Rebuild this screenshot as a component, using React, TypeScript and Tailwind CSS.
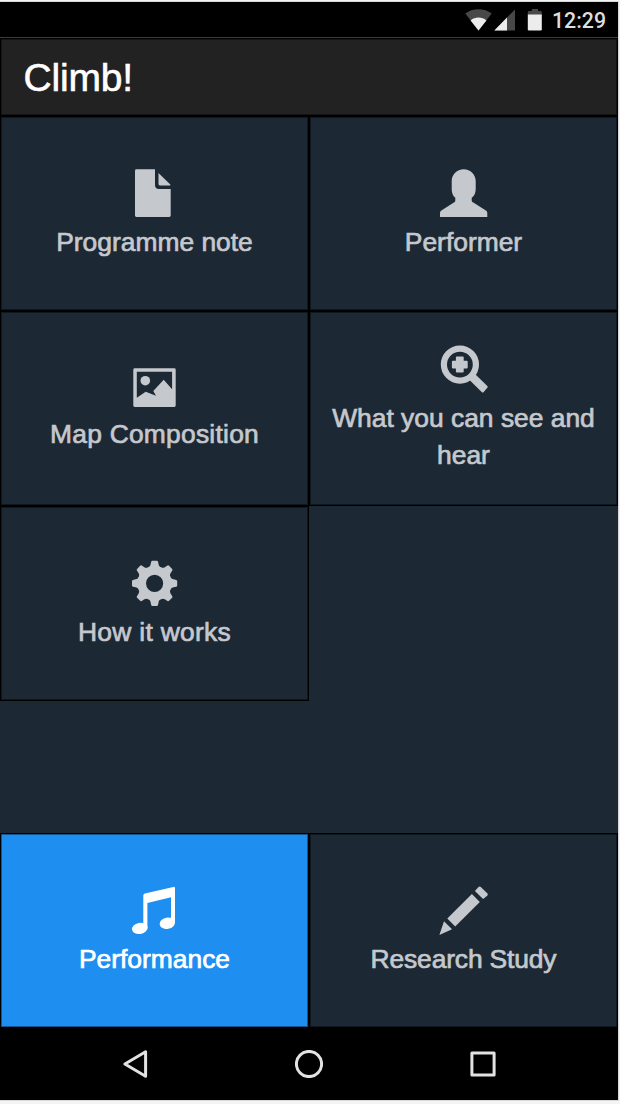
import React from "react";

function Icon({ children }: { children: React.ReactNode }) {
  return (
    <svg viewBox="-0.5 0 48 48" className="mr-px mb-[7px] block h-12 w-12 shrink-0 overflow-visible fill-current">
      {children}
    </svg>
  );
}

const FileIcon = () => (
  <Icon>
    <path d="M5.9 .3H24.5V16Q24.5 20 28.5 20H40.2V46.6Q40.2 48 38.8 48H5.9Q4.5 48 4.5 46.6V1.7Q4.5 .3 5.9 .3Z" />
    <path d="M28 4L39.8 15.4V16.5H29.4Q28 16.5 28 15.1Z" />
  </Icon>
);

const UserIcon = () => (
  <Icon>
    <path d="M24.2 .3C31 .3 36.2 5.5 36.2 12V20C36.2 24 34.8 27 32.2 28.7V31.2C32.2 32.3 32.8 33 33.8 33.6L46.4 41.6Q47.8 42.5 47.8 44V48H.5V44Q.5 42.5 1.9 41.6L14.4 33.6C15.3 33 15.8 32.3 15.8 31.2V28.7C13.4 27 12.2 24 12.2 20V12C12.2 5.5 17.4 .3 24.2 .3Z" />
  </Icon>
);

const PictureIcon = () => (
  <Icon>
    <path
      fillRule="evenodd"
      d="M4.2 7.3H43.8Q45.2 7.3 45.2 8.7V44.6Q45.2 46 43.8 46H4.2Q2.8 46 2.8 44.6V8.7Q2.8 7.3 4.2 7.3ZM6.3 10.8V36.7L15.2 30.7L25.5 34.7L22.8 30L33.2 18.7L41.6 28.3V10.8Z"
    />
    <circle cx="14.8" cy="19.7" r="4.8" />
  </Icon>
);

const ZoomInIcon = () => (
  <Icon>
    <circle cx="20.4" cy="19.6" r="16" fill="none" stroke="currentColor" strokeWidth="6.2" />
    <rect x="16.4" y="11.6" width="7.8" height="16" rx="1" />
    <rect x="12.4" y="15.7" width="15.8" height="7.9" rx="1" />
    <path d="M35.5 29L47.8 41Q48.8 41.9 47.8 42.8L44.2 47Q43.2 48 42.2 47L30 35Z" />
  </Icon>
);

const GearIcon = () => (
  <Icon>
    <g transform="translate(24.1 24.3)">
      <circle r="12.9" fill="none" stroke="currentColor" strokeWidth="8.6" />
      {[0, 45, 90, 135, 180, 225, 270, 315].map((a) => (
        <path
          key={a}
          transform={`rotate(${a})`}
          d="M-6.3 -15.5C-4.6 -17 -4.3 -17.6 -4 -19L-3.4 -21.6Q-3.2 -22.6 -2.2 -22.6H2.2Q3.2 -22.6 3.4 -21.6L4 -19C4.3 -17.6 4.6 -17 6.3 -15.5Z"
        />
      ))}
    </g>
  </Icon>
);

const MusicIcon = () => (
  <Icon>
    <path d="M12.8 9.6Q12.8 8 14.4 7.5L42.8 .9Q44.5 .5 44.5 2.2V37H40.5V11.3L16.9 17V42.5H12.8Z" />
    <ellipse cx="36.8" cy="37.2" rx="7.8" ry="5.6" transform="rotate(-10 36.8 37.2)" />
    <ellipse cx="9.3" cy="42.4" rx="7.9" ry="5.6" transform="rotate(-10 9.3 42.4)" />
  </Icon>
);

const PencilIcon = () => (
  <Icon>
    <path d="M-.1 48.9L4.5 35.3L12.5 43.3Z" />
    <path d="M7.8 32.5L32.4 8L40.3 15.9L15.7 40.4Z" />
    <path d="M35.4 4.9L39 1.1Q40.1 0 41.3 1.1L47.7 7.3Q48.9 8.5 47.7 9.7L43.6 13.1Z" />
  </Icon>
);

function Tile({ icon, label, className }: { icon: React.ReactNode; label: string; className: string }) {
  return (
    <button
      className={`flex h-[195px] w-[309px] flex-col items-center border border-black px-2 text-center text-[26.4px] leading-[37px] shadow-[inset_0_0_0_1px_rgba(0,0,0,0.4)] [-webkit-text-stroke:0.7px_currentColor] ${className}`}
    >
      {icon}
      <span>{label}</span>
    </button>
  );
}

function StatusBar() {
  return (
    <div className="flex h-[36px] items-center justify-end border-b border-[#3c3c3c] bg-black pt-px pr-[12px]">
      <svg viewBox="465 8 78 24" className="mr-[9px] h-6 w-[78px]">
        <path d="M465.3 13.6C472.5 7.8 484.5 7.8 491.7 13.6L478.5 30.6Z" fill="#484848" />
        <path d="M470.6 20.4C475 16.6 482 16.6 486.4 20.4L478.5 30.6Z" fill="#ececec" />
        <path d="M494.3 30.5L515 9.5V30.5Z" fill="#484848" />
        <path d="M494.3 30.5L507 17.6V30.5Z" fill="#ececec" />
        <path d="M527.8 15V12.2Q527.8 11 529 11H531.8V9H538V11H540.6Q541.8 11 541.8 12.2V15Z" fill="#484848" />
        <path d="M527.8 14.6H541.8V29.3Q541.8 30.5 540.6 30.5H529Q527.8 30.5 527.8 29.3Z" fill="#ececec" />
      </svg>
      <span className="pt-px font-[Roboto,sans-serif] text-[21.3px] leading-none font-medium text-[#dedede]">12:29</span>
    </div>
  );
}

function NavBar() {
  return (
    <nav className="flex h-[72px] items-center justify-center gap-[146px] bg-black">
      <svg viewBox="0 0 28 28" className="h-7 w-7" fill="none" stroke="#e2e2e2" strokeWidth="3" strokeLinejoin="round">
        <path d="M3.9 14L24.6 1.8V26.2Z" />
      </svg>
      <svg viewBox="0 0 28 28" className="h-7 w-7" fill="none" stroke="#e2e2e2" strokeWidth="3">
        <circle cx="14" cy="14" r="12.6" />
      </svg>
      <svg viewBox="0 0 28 28" className="h-7 w-7" fill="none" stroke="#e2e2e2" strokeWidth="3" strokeLinejoin="round">
        <rect x="2.9" y="2.9" width="22.2" height="22.2" />
      </svg>
    </nav>
  );
}

export default function App() {
  return (
    <div className="h-[1104px] w-[620px] bg-[#f4f4f4] pt-[2px] font-['Liberation_Sans',Arial,sans-serif]">
      <div className="flex h-[1098px] w-[618px] flex-col bg-[#1c2935] text-[#c5c8cd] shadow-[0_0_0_1px_#d8d8d8]">
        <StatusBar />
        <header className="flex h-[78px] items-center border border-black bg-[#222222] pl-[22.5px] shadow-[inset_0_0_0_1px_rgba(0,0,0,0.4)]">
          <h1 className="text-[39px] leading-none tracking-[-0.2px] text-white [-webkit-text-stroke:0.6px_currentColor]">
            Climb!
          </h1>
        </header>
        <main className="flex grow flex-wrap content-start">
          <Tile className="pt-[52px]" icon={<FileIcon />} label="Programme note" />
          <Tile className="pt-[52px]" icon={<UserIcon />} label="Performer" />
          <Tile className="pt-[49px] tracking-[0.24px]" icon={<PictureIcon />} label="Map Composition" />
          <Tile className="pt-[33px]" icon={<ZoomInIcon />} label="What you can see and hear" />
          <Tile className="pt-[52px] tracking-[0.3px]" icon={<GearIcon />} label="How it works" />
        </main>
        <div className="flex">
          <Tile className="bg-[#1f8ef1] pt-[52px] text-white" icon={<MusicIcon />} label="Performance" />
          <Tile className="pt-[52px] tracking-[-0.14px]" icon={<PencilIcon />} label="Research Study" />
        </div>
        <NavBar />
      </div>
    </div>
  );
}
